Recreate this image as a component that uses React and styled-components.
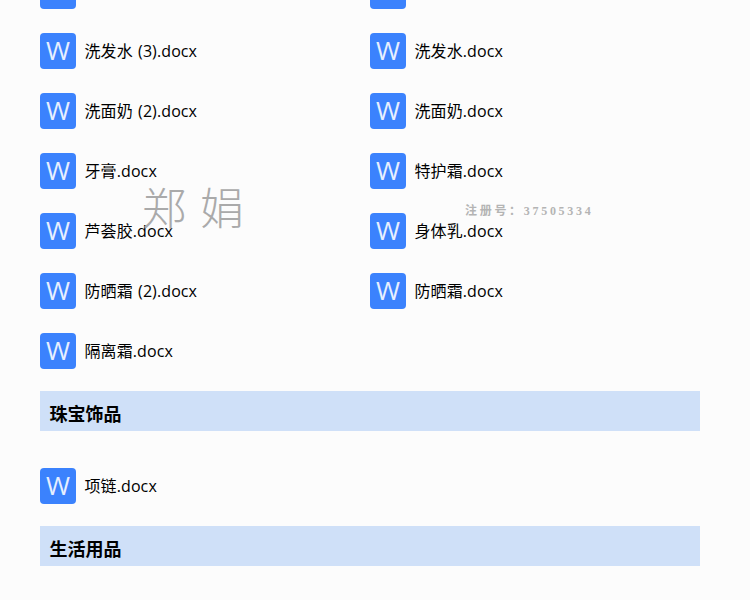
import React from "react";
import styled, { createGlobalStyle } from "styled-components";

const GlobalStyle = createGlobalStyle`
  html, body {
    margin: 0;
    height: 600px;
    overflow: hidden;
    background: #fcfcfc;
  }
`;

const Page = styled.div`
  position: relative;
  width: 750px;
  height: 600px;
  overflow: hidden;
  padding: 0 50px 0 40px;
  box-sizing: border-box;
  color: #000;
  font-family: "Open Sans", "Noto Sans CJK SC", sans-serif;
`;

const FileGrid = styled.div`
  display: grid;
  grid-template-columns: 330px 330px;
  grid-auto-rows: 36px;
  row-gap: 24px;
  margin-top: ${(p) => p.$top || 0}px;
`;

const FileItem = styled.div`
  display: flex;
  align-items: center;
  gap: 8.5px;
  height: 36px;
`;

const FileIcon = styled.div`
  width: 36px;
  height: 36px;
  flex: none;
  display: flex;
  align-items: center;
  justify-content: center;
  padding-bottom: 2px;
  box-sizing: border-box;
  border-radius: 4px;
  background: #3b82fd;
  color: #e6efff;
  font-family: "Open Sans", sans-serif;
  font-size: 26px;
  font-weight: 400;
  line-height: 34px;
`;

const FileName = styled.span`
  font-size: 16px;
  line-height: 24px;
  white-space: nowrap;
  letter-spacing: 0.1px;
  word-spacing: 1px;
`;

const SectionTitle = styled.h2`
  margin: ${(p) => p.$top}px 0 0;
  height: 40px;
  padding: 6px 10px 0 9.5px;
  box-sizing: border-box;
  background: #cfe0f8;
  font-size: 18px;
  line-height: 34px;
  font-weight: 700;
`;

const Watermark = styled.div`
  position: absolute;
  font-family: "Noto Sans CJK SC", "Liberation Serif", serif;
  color: #aaaaaa;
  white-space: nowrap;
  pointer-events: none;
`;

const Signature = styled(Watermark)`
  left: 142px;
  top: 174px;
  font-size: 44px;
  line-height: 64px;
  font-weight: 300;
  letter-spacing: 14px;
`;

const RegNumber = styled(Watermark)`
  left: 465px;
  top: 203px;
  font-family: "Liberation Serif", "Noto Sans CJK SC", serif;
  font-size: 12px;
  line-height: 17px;
  font-weight: 700;
  letter-spacing: 2.7px;
  color: #b4b4b4;
`;

const skincare = [
  "",
  "",
  "洗发水 (3).docx",
  "洗发水.docx",
  "洗面奶 (2).docx",
  "洗面奶.docx",
  "牙膏.docx",
  "特护霜.docx",
  "芦荟胶.docx",
  "身体乳.docx",
  "防晒霜 (2).docx",
  "防晒霜.docx",
  "隔离霜.docx",
];

const File = ({ name }) => (
  <FileItem>
    <FileIcon>W</FileIcon>
    <FileName>{name}</FileName>
  </FileItem>
);

export default function App() {
  return (
    <Page>
      <GlobalStyle />
      <FileGrid $top={-27}>
        {skincare.map((name, i) => (
          <File key={i} name={name} />
        ))}
      </FileGrid>
      <SectionTitle $top={22}>珠宝饰品</SectionTitle>
      <FileGrid $top={37}>
        <File name="项链.docx" />
      </FileGrid>
      <SectionTitle $top={22}>生活用品</SectionTitle>
      <Signature>郑娟</Signature>
      <RegNumber>注册号：37505334</RegNumber>
    </Page>
  );
}
